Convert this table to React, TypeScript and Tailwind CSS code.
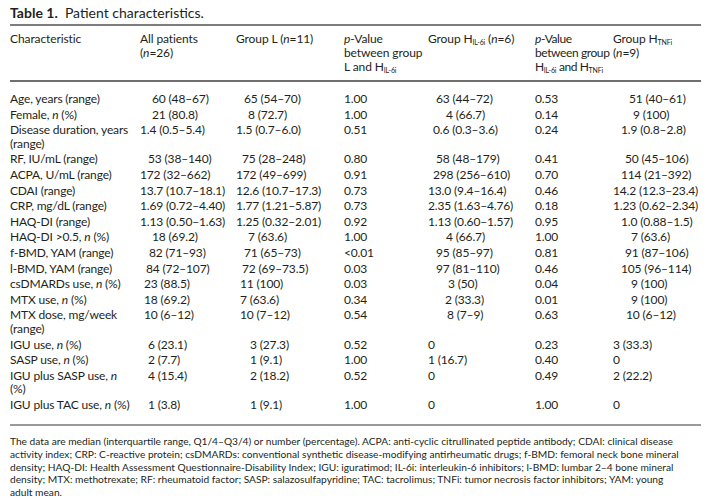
import type { ReactNode } from 'react';

const N = () => <i>n</i>;
const Sub = ({ children }: { children: ReactNode }) => (
  <sub className="text-[7px] tracking-tight">{children}</sub>
);

type Cell = [ReactNode, string?];
type Row = { label: ReactNode; cells: Cell[] };

const rows: Row[] = [
  { label: 'Age, years (range)', cells: [['60 (48–67)', 'pl-[12px]'], ['65 (54–70)', 'pl-[8px]'], ['1.00'], ['63 (44–72)', 'pl-[8px]'], ['0.53'], ['51 (40–61)', 'pl-[16px]']] },
  { label: <>Female, <N /> (%)</>, cells: [['21 (80.8)', 'pl-[12px]'], ['8 (72.7)', 'pl-[12px]'], ['1.00'], ['4 (66.7)', 'pl-[18px]'], ['0.14'], ['9 (100)', 'pl-[20px]']] },
  { label: <>Disease duration, years<br />(range)</>, cells: [['1.4 (0.5–5.4)'], ['1.5 (0.7–6.0)'], ['0.51'], ['0.6 (0.3–3.6)', 'pl-[5px]'], ['0.24'], ['1.9 (0.8–2.8)', 'pl-[8px]']] },
  { label: 'RF, IU/mL (range)', cells: [['53 (38–140)', 'pl-[8px]'], ['75 (28–248)', 'pl-[6px]'], ['0.80'], ['58 (48–179)', 'pl-[8px]'], ['0.41'], ['50 (45–106)', 'pl-[12px]']] },
  { label: 'ACPA, U/mL (range)', cells: [['172 (32–662)'], ['172 (49–699)'], ['0.91'], ['298 (256–610)', 'pl-[5px]'], ['0.70'], ['114 (21–392)', 'pl-[8px]']] },
  { label: 'CDAI (range)', cells: [['13.7 (10.7–18.1)'], ['12.6 (10.7–17.3)'], ['0.73'], ['13.0 (9.4–16.4)'], ['0.46'], ['14.2 (12.3–23.4)']] },
  { label: 'CRP, mg/dL (range)', cells: [['1.69 (0.72–4.40)'], ['1.77 (1.21–5.87)'], ['0.73'], ['2.35 (1.63–4.76)'], ['0.18'], ['1.23 (0.62–2.34)']] },
  { label: 'HAQ-DI (range)', cells: [['1.13 (0.50–1.63)'], ['1.25 (0.32–2.01)'], ['0.92'], ['1.13 (0.60–1.57)'], ['0.95'], ['1.0 (0.88–1.5)', 'pl-[8px]']] },
  { label: <>HAQ-DI &gt;0.5, <N /> (%)</>, cells: [['18 (69.2)', 'pl-[12px]'], ['7 (63.6)', 'pl-[12px]'], ['1.00'], ['4 (66.7)', 'pl-[18px]'], ['1.00'], ['7 (63.6)', 'pl-[18px]']] },
  { label: 'f-BMD, YAM (range)', cells: [['82 (71–93)', 'pl-[9px]'], ['71 (65–73)', 'pl-[8px]'], ['<0.01'], ['95 (85–97)', 'pl-[8px]'], ['0.81'], ['91 (87–106)', 'pl-[12px]']] },
  { label: 'l-BMD, YAM (range)', cells: [['84 (72–107)', 'pl-[6px]'], ['72 (69–73.5)', 'pl-[6px]'], ['0.03'], ['97 (81–110)', 'pl-[8px]'], ['0.46'], ['105 (96–114)', 'pl-[8px]']] },
  { label: <>csDMARDs use, <N /> (%)</>, cells: [['23 (88.5)', 'pl-[4px]'], ['11 (100)', 'pl-[4px]'], ['0.03'], ['3 (50)', 'pl-[20px]'], ['0.04'], ['9 (100)', 'pl-[18px]']] },
  { label: <>MTX use, <N /> (%)</>, cells: [['18 (69.2)', 'pl-[4px]'], ['7 (63.6)', 'pl-[4px]'], ['0.34'], ['2 (33.3)', 'pl-[17px]'], ['0.01'], ['9 (100)', 'pl-[18px]']] },
  { label: <>MTX dose, mg/week<br />(range)</>, cells: [['10 (6–12)', 'pl-[4px]'], ['10 (7–12)', 'pl-[4px]'], ['0.54'], ['8 (7–9)', 'pl-[19px]'], ['0.63'], ['10 (6–12)', 'pl-[13px]']] },
  { label: <>IGU use, <N /> (%)</>, cells: [['6 (23.1)', 'pl-[8px]'], ['3 (27.3)', 'pl-[14px]'], ['0.52'], ['0'], ['0.23'], ['3 (33.3)']] },
  { label: <>SASP use, <N /> (%)</>, cells: [['2 (7.7)', 'pl-[8px]'], ['1 (9.1)', 'pl-[14px]'], ['1.00'], ['1 (16.7)'], ['0.40'], ['0']] },
  { label: <>IGU plus SASP use, <N /><br />(%)</>, cells: [['4 (15.4)', 'pl-[8px]'], ['2 (18.2)', 'pl-[14px]'], ['0.52'], ['0'], ['0.49'], ['2 (22.2)']] },
  { label: <>IGU plus TAC use, <N /> (%)</>, cells: [['1 (3.8)', 'pl-[8px]'], ['1 (9.1)', 'pl-[14px]'], ['1.00'], ['0'], ['1.00'], ['0']] },
];

const cols = 'grid grid-cols-[130px_96px_108px_84px_107px_78px_88px]';

export default function App() {
  return (
    <div className="w-[711px] h-[499px] overflow-hidden bg-white px-[10px] pt-[5px] text-[#231f20] font-['Lato',sans-serif]">
      <p className="text-[14px] leading-[15px]">
        <span className="font-bold">Table 1.</span>&nbsp; Patient characteristics.
      </p>

      <div className="mt-[4px] border-t-2 border-[#7d7d7d]">
        <div className={`${cols} text-[12px] leading-[14px] tracking-[-0.1px] pt-[6px] pb-[6px] border-b-2 border-[#6f6f6f]`}>
          <div>Characteristic</div>
          <div>All patients<br />(<N />=26)</div>
          <div className="whitespace-nowrap">Group L (<N />=11)</div>
          <div className="whitespace-nowrap"><i>p</i>-Value<br />between group<br />L and H<Sub>IL-6i</Sub></div>
          <div className="whitespace-nowrap">Group H<Sub>IL-6i</Sub> (<N />=6)</div>
          <div className="whitespace-nowrap tracking-[-0.4px]"><i>p</i>-Value<br />between group<br />H<Sub>IL-6i</Sub> and H<Sub>TNFi</Sub></div>
          <div className="whitespace-nowrap">Group H<Sub>TNFi</Sub><br />(<N />=9)</div>
        </div>

        <div className="pt-[9px] pb-[12px] border-b-2 border-[#9a9a9a] text-[12px] leading-[13.6px] tracking-[-0.15px]">
          {rows.map((r, i) => (
            <div key={i} className={`${cols} py-px`}>
              <div className="whitespace-nowrap">{r.label}</div>
              {r.cells.map(([v, pad], j) => (
                <div key={j} className={`whitespace-nowrap ${pad ?? ''}`}>{v}</div>
              ))}
            </div>
          ))}
        </div>
      </div>

      <p className="mt-[9px] text-[10.2px] leading-[12.6px] whitespace-nowrap">
        The data are median (interquartile range, Q1/4–Q3/4) or number (percentage). ACPA: anti-cyclic citrullinated peptide antibody; CDAI: clinical disease<br />
        activity index; CRP: C-reactive protein; csDMARDs: conventional synthetic disease-modifying antirheumatic drugs; f-BMD: femoral neck bone mineral<br />
        density; HAQ-DI: Health Assessment Questionnaire-Disability Index; IGU: iguratimod; IL-6i: interleukin-6 inhibitors; l-BMD: lumbar 2–4 bone mineral<br />
        density; MTX: methotrexate; RF: rheumatoid factor; SASP: salazosulfapyridine; TAC: tacrolimus; TNFi: tumor necrosis factor inhibitors; YAM: young<br />
        adult mean.
      </p>
    </div>
  );
}
